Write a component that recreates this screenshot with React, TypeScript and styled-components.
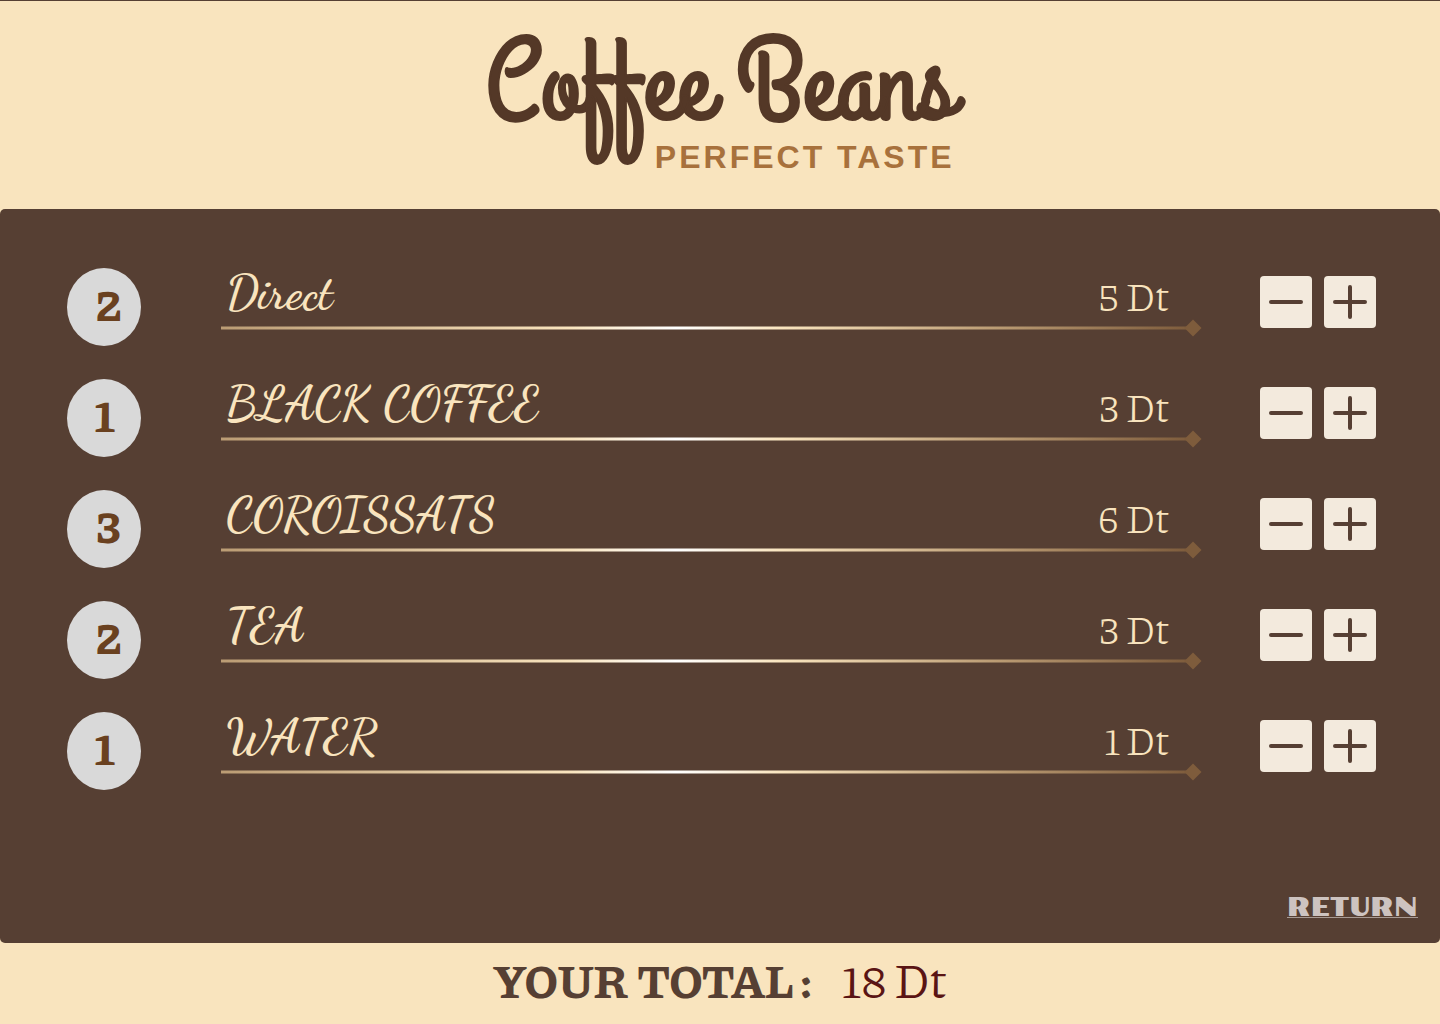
import { useState } from "react";
import styled, { createGlobalStyle } from "styled-components";

const GlobalStyle = createGlobalStyle`
  *, *::before, *::after { box-sizing: border-box; }
  body { margin: 0; background: #f9e4be; }
`;

const script = `"Dancing Script", "Liberation Serif", serif`;
const slab = `"Piazzolla", "Liberation Serif", serif`;

const Page = styled.div`
  display: flex;
  flex-direction: column;
  min-height: 100vh;
  background: #f9e4be;
  color: #563f33;
`;

const Header = styled.header`
  display: flex;
  justify-content: center;
  padding: 34px 0;
  border-top: 1px solid #563f33;
`;

const Brand = styled.div`
  display: flex;
  flex-direction: column;
`;

const BrandName = styled.h1`
  margin: 0;
  font: 400 114px/104px "Grand Hotel", ${script};
  -webkit-text-stroke: 2px #543827;
  color: #543827;
`;

const Tagline = styled.p`
  margin: 0;
  align-self: flex-end;
  font: 700 32px/36px "Liberation Sans", sans-serif;
  letter-spacing: 3px;
  color: #a8713c;
`;

const Panel = styled.main`
  flex: 1;
  display: flex;
  flex-direction: column;
  justify-content: space-between;
  gap: 40px;
  padding: 59px 22px 25px 67px;
  border-radius: 5px;
  background: #563f33;
`;

const Items = styled.ul`
  display: flex;
  flex-direction: column;
  gap: 33px;
  margin: 0;
  padding: 0 42px 0 0;
  list-style: none;
`;

const Item = styled.li`
  display: flex;
  height: 78px;
`;

const Quantity = styled.output`
  flex: none;
  width: 74px;
  padding-left: 28px;
  border-radius: 50%;
  background: #d9d9d9;
  font: 700 48px/68px ${slab};
  color: #6a4120;
`;

const Details = styled.div`
  flex: 1;
  display: flex;
  flex-direction: column;
  margin: 0 59px 0 80px;
`;

const Labels = styled.div`
  display: flex;
  justify-content: space-between;
  height: 52px;
  padding: 0 32px 0 5px;
  color: #f9e4be;
`;

const Name = styled.span`
  font: 600 48px/50px ${script};
`;

const Price = styled.span`
  font: 300 40px/54px ${slab};
`;

const Rule = styled.div`
  display: flex;
  align-items: center;
  height: 16px;
  &::before {
    content: "";
    flex: 1;
    height: 4px;
    margin-right: -2px;
    border: solid rgba(86, 63, 51, 0.5);
    border-width: 1px 0;
    background: linear-gradient(90deg, #bb9c74 0%, #f9e4be 36%, #ffffff 47%, #f9e4be 58%, #bb9c74 80%, #7e5c3c 100%) border-box;
  }
  &::after {
    content: "";
    width: 12px;
    height: 12px;
    margin-right: 2px;
    background: #7e5c3c;
    transform: rotate(45deg);
  }
`;

const Controls = styled.div`
  display: flex;
  gap: 12px;
  padding-top: 8px;
`;

const StepButton = styled.button`
  display: grid;
  place-items: center;
  width: 52px;
  height: 52px;
  padding: 0;
  border: 0;
  border-radius: 4px;
  background: #f3eadd;
  color: #563f33;
  cursor: pointer;
`;

const ReturnLink = styled.a`
  align-self: flex-end;
  border-bottom: 1px solid #a89a93;
  font: 400 26px/18px "Poller One", "DejaVu Sans", sans-serif;
  color: #cdc3c0;
  text-decoration: none;
`;

const Footer = styled.footer`
  display: flex;
  justify-content: center;
  align-items: baseline;
  gap: 30px;
  padding: 8px 0 17px;
`;

const TotalLabel = styled.span`
  font: 700 48px/56px ${slab};
`;

const TotalValue = styled.output`
  font: 400 48px/56px ${slab};
  color: #5a1414;
`;

type Product = { name: string; price: number; quantity: number };

const initialOrder: Product[] = [
  { name: "Direct", price: 5, quantity: 2 },
  { name: "BLACK COFFEE", price: 3, quantity: 1 },
  { name: "COROISSATS", price: 6, quantity: 3 },
  { name: "TEA", price: 3, quantity: 2 },
  { name: "WATER", price: 1, quantity: 1 },
];

function StepIcon({ plus }: { plus?: boolean }) {
  return (
    <svg width="36" height="36" viewBox="0 0 36 36" fill="none" stroke="currentColor" strokeWidth="4" strokeLinecap="round" aria-hidden="true">
      <path d={plus ? "M3 18H33M18 3V33" : "M3 18H33"} />
    </svg>
  );
}

export default function App() {
  const [order, setOrder] = useState(initialOrder);
  const [total, setTotal] = useState(18);

  const change = (index: number, step: number) => {
    const item = order[index];
    if (item.quantity + step < 0) return;
    setOrder(order.map((p, i) => (i === index ? { ...p, quantity: p.quantity + step } : p)));
    setTotal(total + step * item.price);
  };

  return (
    <Page>
      <GlobalStyle />
      <Header>
        <Brand>
          <BrandName>Coffee Beans</BrandName>
          <Tagline>PERFECT TASTE</Tagline>
        </Brand>
      </Header>
      <Panel>
        <Items>
          {order.map((item, index) => (
            <Item key={item.name}>
              <Quantity>{item.quantity}</Quantity>
              <Details>
                <Labels>
                  <Name>{item.name}</Name>
                  <Price>{item.price} Dt</Price>
                </Labels>
                <Rule />
              </Details>
              <Controls>
                <StepButton type="button" aria-label={`Remove one ${item.name}`} onClick={() => change(index, -1)}>
                  <StepIcon />
                </StepButton>
                <StepButton type="button" aria-label={`Add one ${item.name}`} onClick={() => change(index, 1)}>
                  <StepIcon plus />
                </StepButton>
              </Controls>
            </Item>
          ))}
        </Items>
        <ReturnLink href="#menu">RETURN</ReturnLink>
      </Panel>
      <Footer>
        <TotalLabel>YOUR TOTAL :</TotalLabel>
        <TotalValue>{total} Dt</TotalValue>
      </Footer>
    </Page>
  );
}
